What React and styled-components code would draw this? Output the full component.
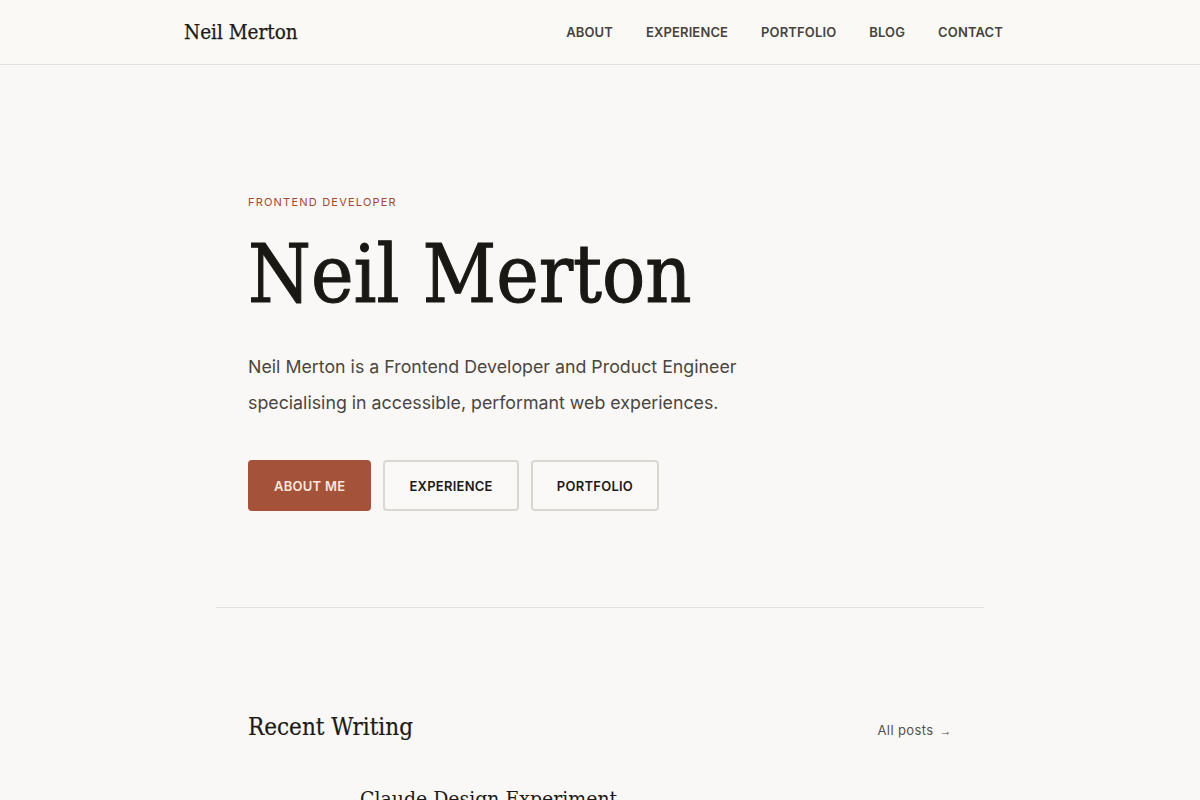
import React from 'react';
import styled, {createGlobalStyle} from 'styled-components';

const GlobalStyle = createGlobalStyle`
  html, body {
    margin: 0;
    padding: 0;
    background: #f9f8f6;
  }

  body {
    font-family: Inter, "Liberation Sans", sans-serif;
    color: #1c1a17;
    -webkit-font-smoothing: antialiased;
  }

  a {
    text-decoration: none;
    color: inherit;
  }
`;

const serif = `"DejaVu Serif Condensed", "DejaVu Serif", serif`;

const navLinks = ['About', 'Experience', 'Portfolio', 'Blog', 'Contact'];

const posts = [
  {date: 'Mar 2025', title: 'Claude Design Experiment'},
];

export const App = () => {
  return (
    <>
      <GlobalStyle/>
      <Header>
        <HeaderInner>
          <Logo href="#">Neil Merton</Logo>
          <Nav>
            {navLinks.map((link, i) => (
              <NavLink href={`#${link.toLowerCase()}`} key={i}>{link}</NavLink>
            ))}
          </Nav>
        </HeaderInner>
      </Header>

      <Main>
        <Hero>
          <Eyebrow>Frontend Developer</Eyebrow>
          <Title>Neil Merton</Title>
          <Intro>
            Neil Merton is a Frontend Developer and Product Engineer
            specialising in accessible, performant web experiences.
          </Intro>
          <Actions>
            <Button href="#about" $primary>About me</Button>
            <Button href="#experience">Experience</Button>
            <Button href="#portfolio">Portfolio</Button>
          </Actions>
        </Hero>

        <Writing>
          <SectionHead>
            <SectionTitle>Recent Writing</SectionTitle>
            <MoreLink href="#blog">All posts <Arrow>→</Arrow></MoreLink>
          </SectionHead>

          <PostList>
            {posts.map((post, i) => (
              <Post key={i}>
                <PostDate>{post.date}</PostDate>
                <PostTitle href="#">{post.title}</PostTitle>
              </Post>
            ))}
          </PostList>
        </Writing>
      </Main>
    </>
  );
}

export default App;

const Header = styled.header`
  background: #faf9f6;
  border-bottom: 1px solid #e4e1dc;
`;

const HeaderInner = styled.div`
  max-width: 832px;
  height: 64px;
  margin: 0 auto;
  display: flex;
  align-items: center;
  justify-content: space-between;
`;

const Logo = styled.a`
  font-family: ${serif};
  font-size: 20.5px;
  -webkit-text-stroke: 0.25px currentColor;
  color: #1c1a17;
`;

const Nav = styled.nav`
  display: flex;
  gap: 33px;
  margin-right: 13px;
`;

const NavLink = styled.a`
  font-size: 13px;
  font-weight: 600;
  letter-spacing: 0.01em;
  text-transform: uppercase;
  color: #46433e;
`;

const Main = styled.main`
  max-width: 768px;
  margin: 0 auto;
`;

const Hero = styled.section`
  padding: 129px 32px 96px;
  border-bottom: 1px solid #e4e1dc;
`;

const Eyebrow = styled.p`
  margin: 0;
  font-size: 11px;
  line-height: 16px;
  letter-spacing: 0.11em;
  text-transform: uppercase;
  color: #a24a30;
`;

const Title = styled.h1`
  margin: 25px 0 0;
  font-family: ${serif};
  font-size: 80px;
  font-weight: 400;
  line-height: 1;
  -webkit-text-stroke: 1px currentColor;
  color: #1a1815;
`;

const Intro = styled.p`
  margin: 34px 0 0;
  max-width: 500px;
  font-size: 17.8px;
  line-height: 36px;
  color: #4a4640;
`;

const Actions = styled.div`
  display: flex;
  gap: 12px;
  margin-top: 39px;
`;

const Button = styled.a`
  display: inline-flex;
  align-items: center;
  height: 51px;
  box-sizing: border-box;
  padding: 0 24px;
  border-radius: 4px;
  border: 2px solid ${props => props.$primary ? '#a5523a' : '#dad7d2'};
  background: ${props => props.$primary ? '#a5523a' : '#faf9f7'};
  color: ${props => props.$primary ? '#f7e7dd' : '#1c1a17'};
  font-size: 13px;
  font-weight: 600;
  letter-spacing: 0.02em;
  text-transform: uppercase;
`;

const Writing = styled.section`
  padding: 105px 32px 64px;
`;

const SectionHead = styled.div`
  display: flex;
  align-items: baseline;
  justify-content: space-between;
`;

const SectionTitle = styled.h2`
  margin: 0;
  font-family: ${serif};
  font-size: 24px;
  font-weight: 400;
  line-height: 1.2;
  -webkit-text-stroke: 0.2px currentColor;
  color: #1c1a17;
`;

const MoreLink = styled.a`
  font-size: 13px;
  letter-spacing: 0.03em;
  color: #55514b;
`;

const Arrow = styled.span`
  font-family: "Liberation Sans", sans-serif;
  font-size: 12px;
  margin-left: 2px;
`;

const PostList = styled.div`
  margin-top: 44px;
  display: flex;
  flex-direction: column;
`;

const Post = styled.div`
  display: grid;
  grid-template-columns: 112px 1fr;
  align-items: start;
`;

// date sits a little lower than the title's cap line
const PostDate = styled.span`
  padding-top: 14px;
  font-size: 12px;
  color: #8a857d;
`;

const PostTitle = styled.a`
  font-family: ${serif};
  font-size: 21px;
  line-height: 1.3;
  color: #1c1a17;
`;
